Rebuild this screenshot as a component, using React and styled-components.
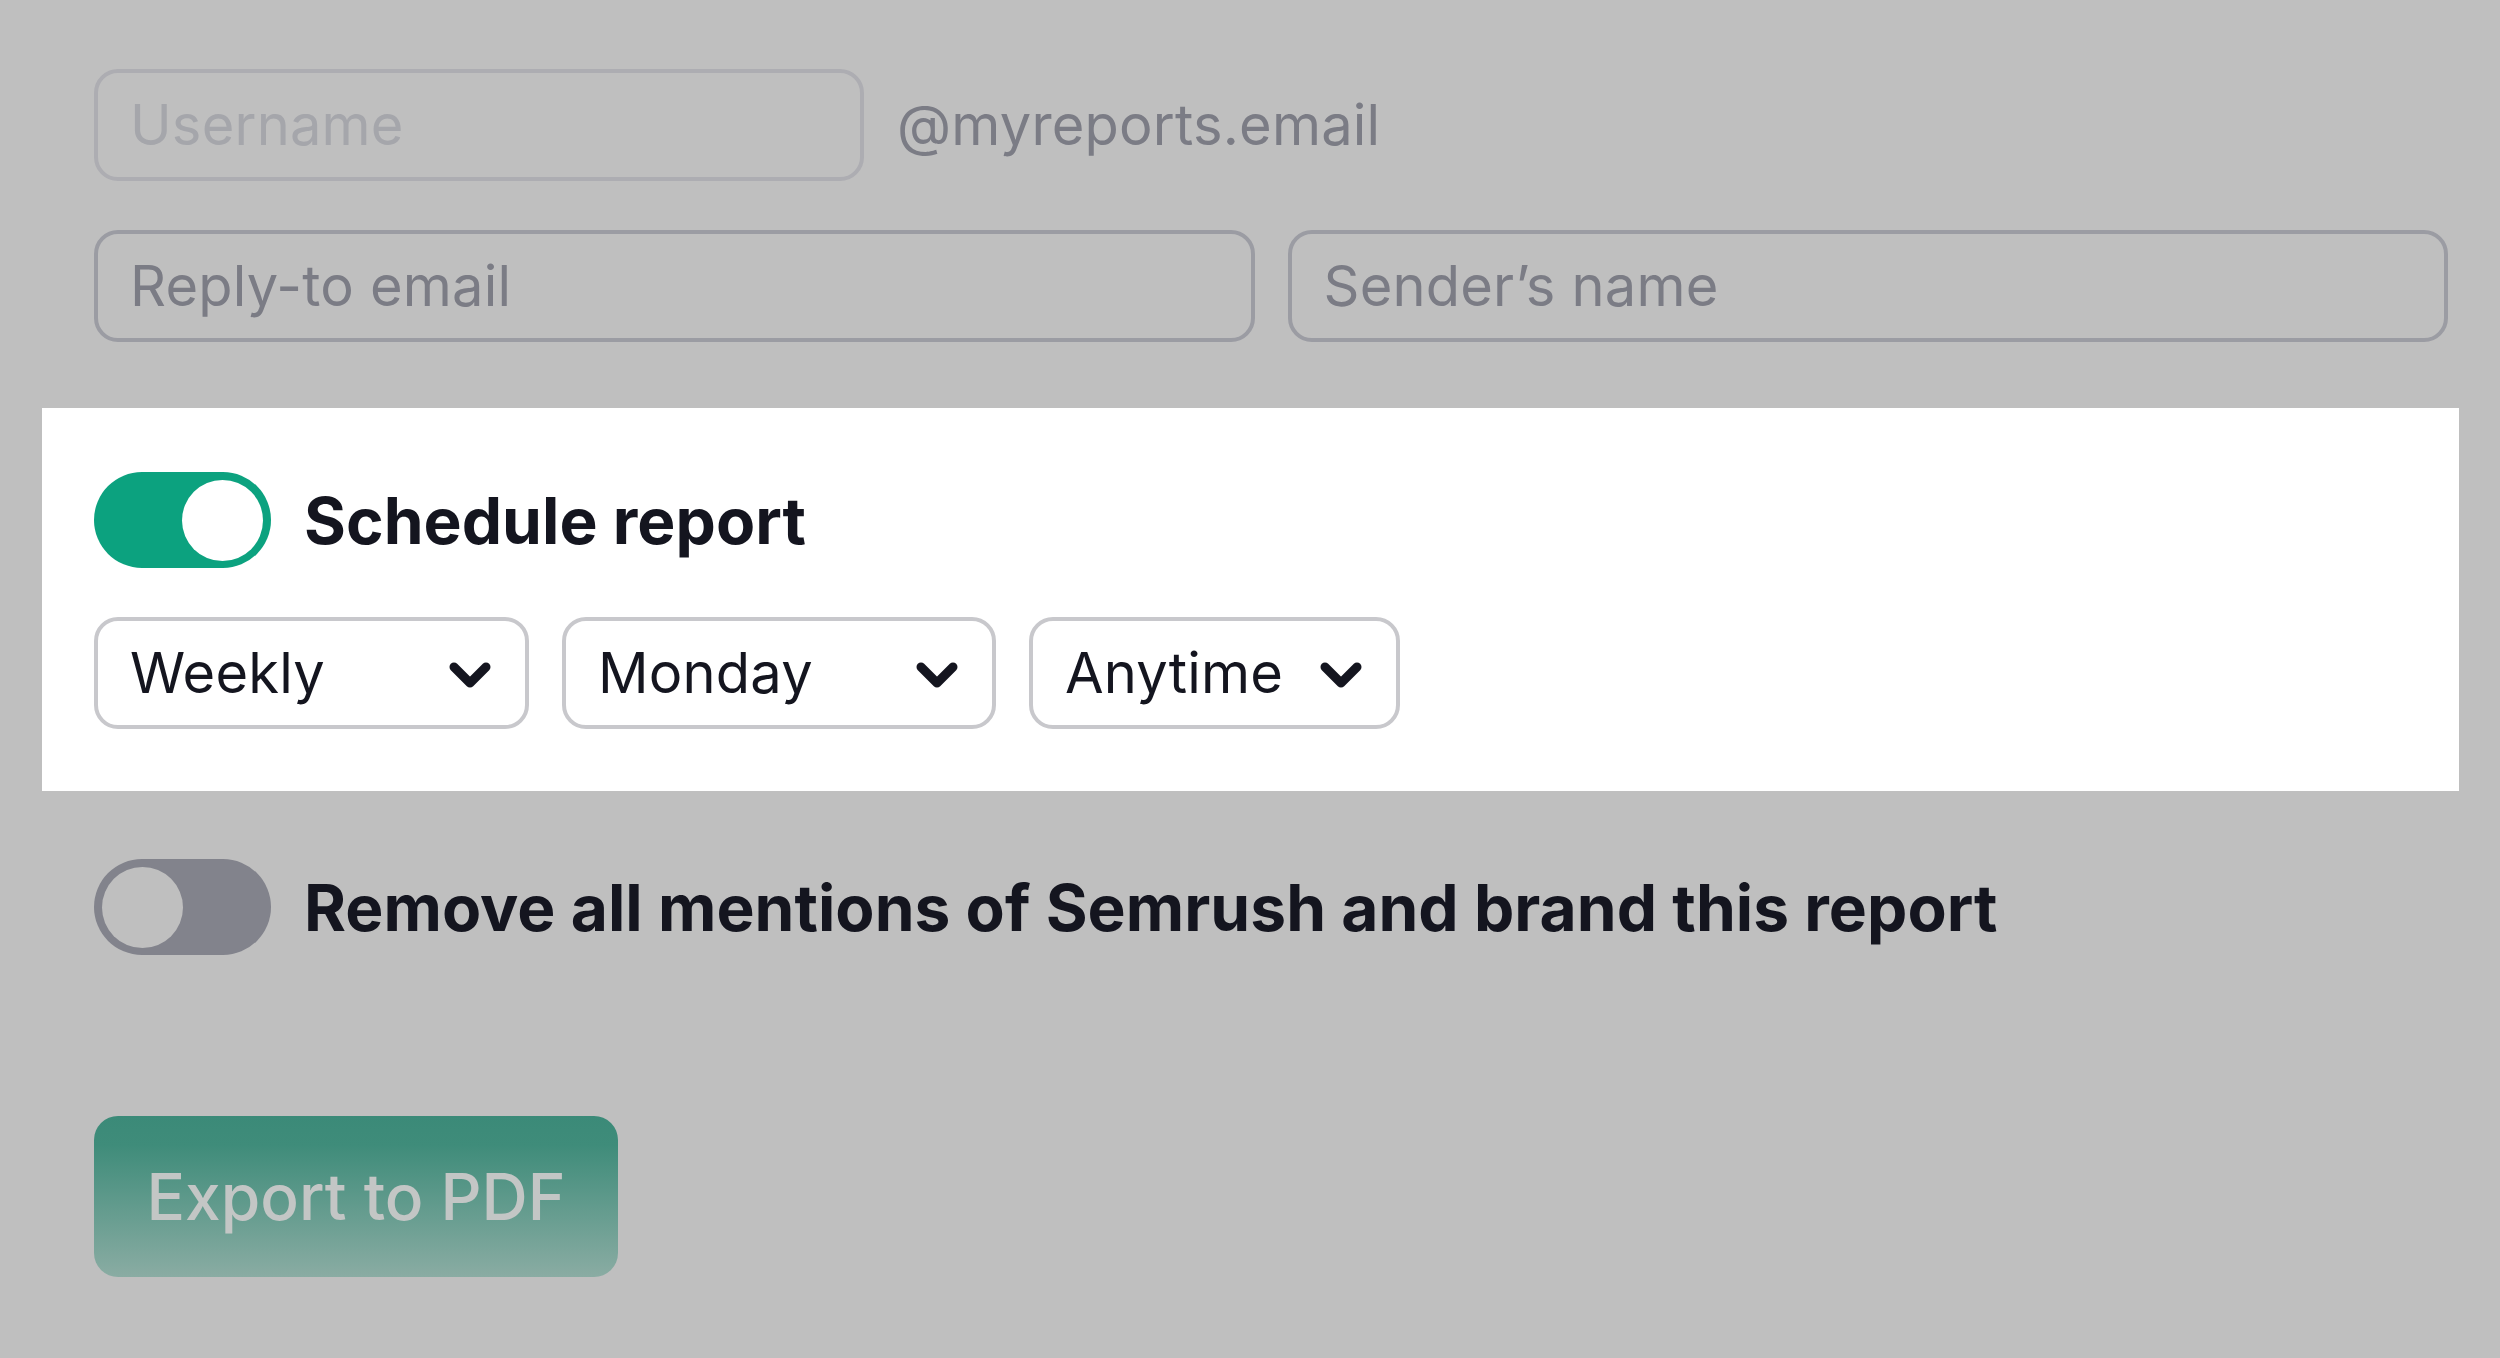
import React from "react";
import styled, { createGlobalStyle } from "styled-components";

const GlobalStyle = createGlobalStyle`
  html, body {
    margin: 0;
    background: #bfbfbf;
  }

  body {
    font-family: "Inter", "Liberation Sans", sans-serif;
    color: #14151f;
  }
`;

const Page = styled.div`
  width: 2500px;
  height: 1358px;
  padding-top: 69px;
  box-sizing: border-box;
  overflow: hidden;
`;

const Section = styled.div`
  padding: 0 52px 0 94px;
`;

const Row = styled.div`
  display: flex;
  align-items: center;
  gap: 33px;
  margin-top: ${(p) => p.$top || 0}px;
`;

const Field = styled.div`
  flex: ${(p) => (p.$grow ? "1" : "none")};
  width: ${(p) => (p.$grow ? "auto" : "770px")};
  height: 112px;
  box-sizing: border-box;
  display: flex;
  align-items: center;
  padding: 0 32px;
  font-size: 56px;
  letter-spacing: 0.2px;
  border: 4px solid ${(p) => (p.$muted ? "#adadb2" : "#9b9ca3")};
  border-radius: 24px;
  color: ${(p) => (p.$muted ? "#a5a6ab" : "#7b7c85")};
`;

const Suffix = styled.span`
  font-size: 56px;
  letter-spacing: 0.2px;
  color: #7b7c85;
`;

const Panel = styled.div`
  margin: 66px 41px 0 42px;
  padding: 64px 52px 62px;
  background: #fff;
`;

const ToggleRow = styled.div`
  display: flex;
  align-items: center;
  gap: 33px;
  margin-top: ${(p) => p.$top || 0}px;
`;

const Track = styled.div`
  display: flex;
  justify-content: ${(p) => (p.$on ? "flex-end" : "flex-start")};
  align-items: center;
  width: 177px;
  height: 96px;
  padding: 0 8px;
  box-sizing: border-box;
  border-radius: 48px;
  background: ${(p) => (p.$on ? "#0ca27f" : "#82838c")};
`;

const Knob = styled.div`
  width: 81px;
  height: 81px;
  border-radius: 50%;
  background: ${(p) => (p.$on ? "#fff" : "#bfbfbf")};
`;

const ToggleLabel = styled.span`
  font-size: 64px;
  font-weight: 700;
  letter-spacing: 0.05px;
  color: #14151f;
`;

const Selects = styled.div`
  display: flex;
  gap: 33px;
  margin-top: 49px;
`;

const Select = styled.div`
  width: ${(p) => p.$width}px;
  height: 112px;
  box-sizing: border-box;
  display: flex;
  align-items: center;
  justify-content: space-between;
  padding: 0 32px;
  font-size: 56px;
  letter-spacing: 0.2px;
  border: 4px solid #c8c8cc;
  border-radius: 24px;
  background: #fff;
`;

const Chevron = styled.svg`
  width: 42px;
  height: 26px;
  margin: 3px 2px 0 0;
  fill: none;
  stroke: #14151f;
  stroke-width: 9;
  stroke-linecap: round;
  stroke-linejoin: round;
  flex: none;
`;

const ExportButton = styled.button`
  display: block;
  width: 524px;
  height: 161px;
  margin-top: 161px;
  padding: 0;
  border: none;
  border-radius: 24px;
  background: linear-gradient(180deg, #3b8a78 0%, #3f8c7a 18%, #8aaca3 100%);
  font-family: inherit;
  font-size: 64px;
  font-weight: 500;
  color: #c3c6c5;
`;

const ChevronIcon = () => (
  <Chevron viewBox="0 0 42 26">
    <path d="M5 5 L21 21 L37 5" />
  </Chevron>
);

export default function App() {
  return (
    <>
      <GlobalStyle />
      <Page>
        <Section>
          <Row>
            <Field $muted>Username</Field>
            <Suffix>@myreports.email</Suffix>
          </Row>
          <Row $top={49}>
            <Field $grow>Reply-to email</Field>
            <Field $grow>Sender’s name</Field>
          </Row>
        </Section>
        <Panel>
          <ToggleRow>
            <Track $on>
              <Knob $on />
            </Track>
            <ToggleLabel>Schedule report</ToggleLabel>
          </ToggleRow>
          <Selects>
            <Select $width={435}>
              Weekly
              <ChevronIcon />
            </Select>
            <Select $width={434}>
              Monday
              <ChevronIcon />
            </Select>
            <Select $width={371}>
              Anytime
              <ChevronIcon />
            </Select>
          </Selects>
        </Panel>
        <Section>
          <ToggleRow $top={68}>
            <Track>
              <Knob />
            </Track>
            <ToggleLabel>Remove all mentions of Semrush and brand this report</ToggleLabel>
          </ToggleRow>
          <ExportButton>Export to PDF</ExportButton>
        </Section>
      </Page>
    </>
  );
}
